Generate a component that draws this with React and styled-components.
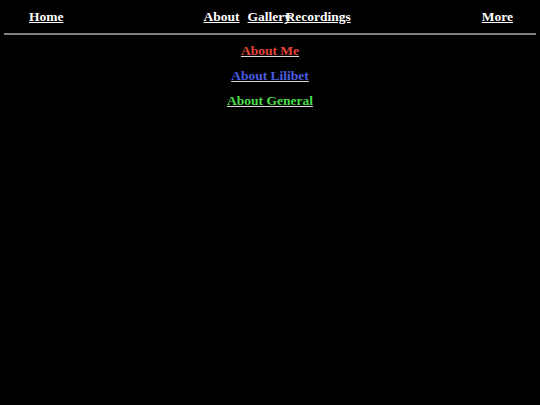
import React from 'react'
import styled, { createGlobalStyle } from 'styled-components'

const GlobalStyle = createGlobalStyle`
	html, body {
		margin: 0;
		background: #000;
	}
	body {
		padding: 0 4px;
		font-family: "Liberation Serif", "Times New Roman", serif;
		font-size: 13.5px;
		font-weight: bold;
	}
`

const NavBar = styled.nav`
	display: flex;
	justify-content: space-between;
	align-items: center;
	height: 33px;
	padding: 0 23px 0 25px;
	border-bottom: 2px solid #808080;
`

const NavGroup = styled.div`
	display: flex;
	margin-left: 9px;
`

const NavLink = styled.a`
	color: #fff;
	text-decoration: underline;
	white-space: nowrap;
	width: ${p => (p.$w ? `${p.$w}px` : 'auto')};
	margin-right: ${p => (p.$gap ? `${p.$gap}px` : '0')};
`

const SubMenu = styled.div`
	display: flex;
	flex-direction: column;
	align-items: center;
	gap: 9px;
	padding-top: 8px;
`

const SubLink = styled.a`
	color: ${p => p.$color};
	text-decoration: underline;
	text-decoration-color: #d8d8d8;
	line-height: 16px;
`

export default function App() {
	return (
		<>
			<GlobalStyle />
			<NavBar>
				<NavLink href="#">Home</NavLink>
				<NavGroup>
					<NavLink href="#" $gap={8}>About</NavLink>
					<NavLink href="#" $w={38}>Gallery</NavLink>
					<NavLink href="#">Recordings</NavLink>
				</NavGroup>
				<NavLink href="#">More</NavLink>
			</NavBar>
			<SubMenu>
				<SubLink href="#" $color="#e6453a">About Me</SubLink>
				<SubLink href="#" $color="#4a5ce0">About Lilibet</SubLink>
				<SubLink href="#" $color="#4ade4a">About General</SubLink>
			</SubMenu>
		</>
	)
}
